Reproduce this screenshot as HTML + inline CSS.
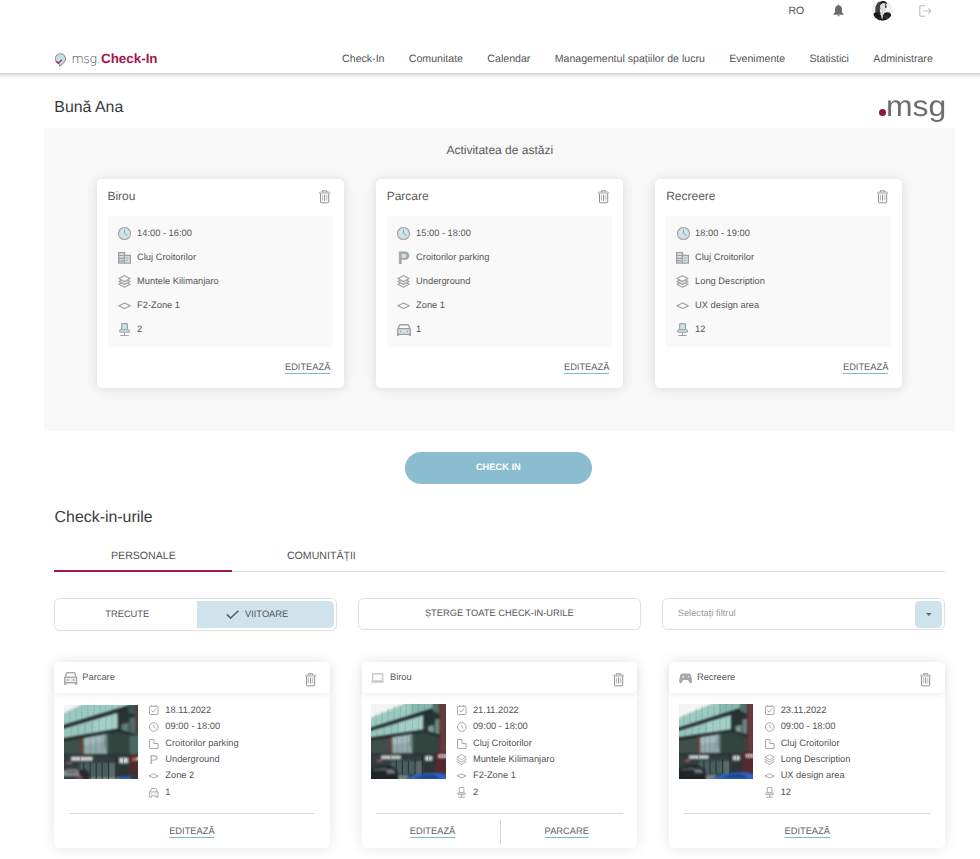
<!DOCTYPE html>
<html lang="ro">
<head>
<meta charset="utf-8">
<title>msg.Check-In</title>
<style>
*{box-sizing:border-box;margin:0;padding:0}
html,body{width:980px;height:859px;overflow:hidden;background:#fff}
body{font-family:"Liberation Sans",Arial,sans-serif;color:#555;position:relative;text-rendering:geometricPrecision}
.abs{position:absolute}
svg{display:block;overflow:visible}
#lang{left:788.4px;top:4.7px;font-size:10.6px;color:#555;line-height:12px}
#nav{left:0;top:72.9px;width:980px;height:7px;background:linear-gradient(to bottom,rgba(0,0,0,.2) 0,rgba(0,0,0,.13) 18%,rgba(0,0,0,.06) 45%,rgba(0,0,0,.02) 75%,rgba(0,0,0,0) 100%)}
#brand{left:71.6px;top:52.4px;white-space:nowrap;font-size:13.4px;line-height:14px}
#brand .m{font-family:"DejaVu Sans Light","DejaVu Sans",sans-serif;font-weight:200;font-size:12.6px;letter-spacing:-.5px;color:#484848}
#brand .c{font-weight:bold;color:#a3174b;margin-left:1px}
#menu{left:342.1px;top:52.7px;display:flex;gap:24.35px;font-size:10.6px;line-height:12px;color:#555;white-space:nowrap}
h1{font-weight:normal;font-size:15.9px;color:#3a3a3a;line-height:18px;white-space:nowrap}
#hello{left:54.3px;top:98.5px}
#biglogo{left:886.2px;top:89.8px;font-size:29.2px;line-height:34px;color:#6e6e6e;white-space:nowrap;transform:scaleX(1.095);transform-origin:0 0}
#bigdot{left:879.3px;top:108.9px;width:7px;height:7px;border-radius:50%;background:#8c1a3e}
#panel{left:44px;top:128px;width:911px;height:303px;background:#f8f8f8}
#today{left:0;top:142.8px;width:999.5px;text-align:center;font-size:12px;line-height:14px;color:#5a5a5a}
.card{top:179px;width:247px;height:209px;background:#fff;border-radius:5px;box-shadow:0 1px 12px rgba(0,0,0,.125)}
.card .t{left:10.4px;top:10.1px;font-size:12px;line-height:14px;color:#5c5c5c}
.card .box{left:10.8px;top:37px;width:225.2px;height:130.8px;background:#f9f9f9}
.row{position:absolute;height:12px;font-size:9.3px;line-height:12px;color:#555;white-space:nowrap}
.box .row{left:29.3px}
.ic{position:absolute}
.pL{position:absolute;left:-18.3px;top:-2.1px;font-size:18px;line-height:18px;font-weight:bold;color:#a6a6a6}
.pLbg{position:absolute;left:-15.2px;top:2.4px;width:5.6px;height:4.2px;background:#cfe3ea}
.pS{position:absolute;left:-15.9px;top:1.1px;font-size:12.8px;line-height:12px;color:#a6a6a6}
.edit{position:absolute;font-size:9.3px;line-height:11.85px;color:#5f5f5f;border-bottom:1.2px solid #7db8cb;white-space:nowrap}
.card .edit{right:13.6px;top:182.5px}
#checkin{left:404.6px;top:451.8px;width:187.5px;height:32.1px;border-radius:16.05px;background:#8bbdd1;color:#fff;font-weight:bold;font-size:9.3px;line-height:31.4px;text-align:center}
#h2{left:54.6px;top:509.2px}
.tab{top:549.8px;width:178px;text-align:center;font-size:10.6px;line-height:12px;color:#555}
#tabline{left:232px;top:570.7px;width:713px;height:1px;background:#dcdcdc}
#tabact{left:54.3px;top:570.1px;width:177.8px;height:1.7px;background:#a6194f}
.fbox{top:598px;width:283px;height:32px;border:1px solid #dfdfdf;border-radius:5.5px;background:#fff}
.ftxt{font-size:9.3px;line-height:12px;color:#555;white-space:nowrap}
.bc{top:662px;width:275.67px;height:186px;background:#fff;border-radius:5px;box-shadow:0 0 15px rgba(0,0,0,.1)}
.bc .hd{left:0;top:0;width:275.67px;height:31px;background:#fff;border-radius:5px;box-shadow:0 3px 6px rgba(0,0,0,.06)}
.bc .ttl{left:28.3px;top:8.6px;font-size:9.3px;line-height:12px;color:#555}
.bc .photo{left:10px;top:42.9px;width:74px;height:74px}
.bc .row{left:111.3px}
.bc .hr{left:14.7px;top:150.6px;width:246.3px;height:1px;background:#d8d8d8}
.bc .edit{top:164px;line-height:10.9px;transform:translateX(-50%)}
</style>
</head>
<body>
<!-- top utility bar -->
<div class="abs" id="lang">RO</div>
<svg class="abs" width="13" height="13" viewBox="0 0 13 13" style="left:831.7px;top:3.6px"><path d="M6.5 .6Q7.3 .6 7.3 1.5Q10 2.3 10 5.4V8.2L11.7 10.2V10.8H1.3V10.2L3 8.2V5.4Q3 2.3 5.7 1.5Q5.7 .6 6.5 .6Z" fill="#6b6b6b"/><path d="M5.3 11.3H7.7Q7.5 12.4 6.5 12.4Q5.5 12.4 5.3 11.3Z" fill="#6b6b6b"/></svg>
<svg class="abs" width="21" height="21" viewBox="0 0 21 21" style="left:872px;top:0"><clipPath id="av"><circle cx="10.4" cy="10.7" r="9.9"/></clipPath><filter id="avb" x="-10%" y="-10%" width="120%" height="120%"><feGaussianBlur stdDeviation=".45"/></filter><circle cx="10.4" cy="10.7" r="10.2" fill="#e2e2e2"/><g clip-path="url(#av)"><g filter="url(#avb)"><rect width="21" height="21" fill="#f0f0f0"/><path d="M3.4 12.4Q2.6 6 6 2.6Q8.6 .8 12 1.2Q14 1.6 14.2 3.2Q12 2.4 10 3.6Q8 5 7.8 9Q7.8 12 9 13.6L5 15Z" fill="#414141"/><path d="M7.6 2.6Q10 .5 13.2 1.3Q15.2 2.4 15.5 4.6L14 3.6Q11 2.6 9 3.7Z" fill="#1f1f1f"/><path d="M8.6 5Q10.5 3 13.4 3.8Q14.3 7 13.6 10Q12.8 13 11 13.9Q8.6 12 8 9Q7.8 6.4 8.6 5Z" fill="#dedede"/><path d="M12.3 3.3Q14.8 4 14.5 7.4L13.5 7.9L12.7 6.5L13.6 6Q13.4 4.5 12.3 3.3Z" fill="#1c1c1c"/><path d="M7.8 8.2H9.2" stroke="#5a4a4c" stroke-width=".6"/><path d="M10 12.3H10.9" stroke="#8a6a70" stroke-width=".55"/><path d="M1.6 13.6Q4 11.5 7 12.3L10 17L12.6 12.7Q16 11.8 18.2 13Q20 15.4 19.4 17.6Q16 21.4 10.4 21.4Q5 21.4 1.6 17Z" fill="#1d1d1d"/><path d="M9 13.2L11 13.6L10.7 18.8L9.5 18.4Z" fill="#d2d2d2"/><path d="M12.6 16.6L15.4 15.6M13.4 18.6L16 17.4" stroke="#6a6a6a" stroke-width=".6"/></g></g></svg>
<svg class="abs" width="13" height="12" viewBox="0 0 13 12" style="left:919.4px;top:4.8px"><path d="M6 .7H2Q.8 .7 .8 1.9V10.1Q.8 11.3 2 11.3H6" fill="none" stroke="#b9b9b9" stroke-width="1.1"/><path d="M4.2 6H11.9M9.4 3.5L11.9 6L9.4 8.5" fill="none" stroke="#c4c4c4" stroke-width="1.1"/></svg>

<!-- nav -->
<div class="abs" id="nav"></div>
<svg class="abs" width="13" height="14" viewBox="0 0 13 14" style="left:53.9px;top:52.6px"><path d="M6.4 .7A5.2 5.2 0 0 1 9.9 9.7Q8 11.6 5.4 13.2Q5.9 11.6 5.7 11A5.2 5.2 0 0 1 6.4 .7Z" fill="#c3dde9" stroke="#8d8d8d" stroke-width="1"/><path d="M2.3 8.2L4.4 10.2L7.9 6.9" fill="none" stroke="#b01c4d" stroke-width="1.3"/></svg>
<div class="abs" id="brand"><span class="m">msg.</span><span class="c">Check-In</span></div>
<div class="abs" id="menu"><span>Check-In</span><span>Comunitate</span><span>Calendar</span><span>Managementul spațiilor de lucru</span><span>Evenimente</span><span>Statistici</span><span>Administrare</span></div>

<h1 class="abs" id="hello">Bună Ana</h1>
<div class="abs" id="bigdot"></div>
<div class="abs" id="biglogo">msg</div>

<div class="abs" id="panel"></div>
<div class="abs" id="today">Activitatea de astăzi</div>

<!-- today cards -->
<div class="abs card" style="left:97px">
  <div class="abs t">Birou</div>
  <svg class="ic" width="12" height="14" viewBox="0 0 12 14" style="position:absolute;left:221.6px;top:11.2px"><path d="M3.4 2V.8H7.8V2" fill="none" stroke="#8a8a8a" stroke-width=".95" stroke-linejoin="round"/><rect x=".35" y="2" width="10.5" height="1.25" rx=".6" fill="#e6e6e6" stroke="#9c9c9c" stroke-width=".55"/><path d="M1.5 3.4V12.1Q1.5 12.8 2.2 12.8H9Q9.7 12.8 9.7 12.1V3.4" fill="none" stroke="#8c8c8c" stroke-width=".95"/><path d="M3.4 4.6V10.6M7.8 4.6V10.6" stroke="#999" stroke-width=".7"/><path d="M5.6 4.6V10.6" stroke="#6a6a6a" stroke-width=".8"/></svg>
  <div class="abs box">
    <div class="row" style="top:10.8px"><svg class="ic" width="15" height="15" viewBox="0 0 15 15" style="left:-19.85px;top:-.85px"><circle cx="7.5" cy="7.5" r="6" fill="#cfe3ea" stroke="#a1a1a1" stroke-width="1.1"/><path d="M7.5 4.1V7.4L10.3 9.4" fill="none" stroke="#a1a1a1" stroke-width="1" stroke-linecap="round"/></svg>14:00 - 16:00</div>
    <div class="row" style="top:34.8px"><svg class="ic" width="13" height="12" viewBox="0 0 13 12" style="left:-19px;top:1.3px"><path d="M.65 .65H6.5V11.2H.65Z" fill="#cfe3ea" stroke="#a1a1a1" stroke-width="1.3"/><path d="M6.5 3.45H12.35V11.2H6.5Z" fill="#cfe3ea" stroke="#a1a1a1" stroke-width="1.3"/><path d="M.65 3.5H6.5M.65 6.3H6.5M.65 8.8H6.5" fill="none" stroke="#a1a1a1" stroke-width="1.15"/><path d="M8.2 5.9H10.4M8.2 8.2H10.4" fill="none" stroke="#a1a1a1" stroke-width="1"/></svg>Cluj Croitorilor</div>
    <div class="row" style="top:58.8px"><svg class="ic" width="13" height="13" viewBox="0 0 13 13" style="left:-19px;top:.1px"><path d="M.9 9.3L6.5 6.3L12.1 9.3L6.5 12.3Z" fill="#f9f9f9" stroke="#a1a1a1" stroke-width="1.15" stroke-linejoin="round"/><path d="M.9 6.4L6.5 3.4L12.1 6.4L6.5 9.4Z" fill="#cfe3ea" stroke="#a1a1a1" stroke-width="1.15" stroke-linejoin="round"/><path d="M.9 3.55L6.5 .65L12.1 3.55L6.5 6.45Z" fill="#f9f9f9" stroke="#a1a1a1" stroke-width="1.15" stroke-linejoin="round"/></svg>Muntele Kilimanjaro</div>
    <div class="row" style="top:82.8px"><svg class="ic" width="14" height="8" viewBox="0 0 14 8" style="left:-19.1px;top:2.95px"><path d="M.85 3.7L6.6 .95L12.35 3.7L6.6 6.45Z" fill="none" stroke="#a1a1a1" stroke-width="1.2" stroke-linejoin="round"/></svg>F2-Zone 1</div>
    <div class="row" style="top:106.8px"><svg class="ic" width="12" height="13" viewBox="0 0 12 13" style="left:-18px;top:.2px"><rect x="2.7" y=".65" width="5.7" height="6.1" rx=".8" fill="#cfe3ea" stroke="#a1a1a1" stroke-width="1.2"/><rect x=".65" y="6.75" width="9.8" height="2.5" rx="1.25" fill="#cfe3ea" stroke="#a1a1a1" stroke-width="1.2"/><path d="M5.5 9.8V12.3M1.7 12.4H9.4" fill="none" stroke="#a1a1a1" stroke-width="1.05" stroke-linecap="round"/></svg>2</div>
  </div>
  <div class="edit">EDITEAZĂ</div>
</div>
<div class="abs card" style="left:376px">
  <div class="abs t" style="left:10.7px">Parcare</div>
  <svg class="ic" width="12" height="14" viewBox="0 0 12 14" style="position:absolute;left:221.6px;top:11.2px"><path d="M3.4 2V.8H7.8V2" fill="none" stroke="#8a8a8a" stroke-width=".95" stroke-linejoin="round"/><rect x=".35" y="2" width="10.5" height="1.25" rx=".6" fill="#e6e6e6" stroke="#9c9c9c" stroke-width=".55"/><path d="M1.5 3.4V12.1Q1.5 12.8 2.2 12.8H9Q9.7 12.8 9.7 12.1V3.4" fill="none" stroke="#8c8c8c" stroke-width=".95"/><path d="M3.4 4.6V10.6M7.8 4.6V10.6" stroke="#999" stroke-width=".7"/><path d="M5.6 4.6V10.6" stroke="#6a6a6a" stroke-width=".8"/></svg>
  <div class="abs box">
    <div class="row" style="top:10.8px"><svg class="ic" width="15" height="15" viewBox="0 0 15 15" style="left:-19.85px;top:-.85px"><circle cx="7.5" cy="7.5" r="6" fill="#cfe3ea" stroke="#a1a1a1" stroke-width="1.1"/><path d="M7.5 4.1V7.4L10.3 9.4" fill="none" stroke="#a1a1a1" stroke-width="1" stroke-linecap="round"/></svg>15:00 - 18:00</div>
    <div class="row" style="top:34.8px"><i class="pLbg"></i><b class="pL">P</b>Croitorilor parking</div>
    <div class="row" style="top:58.8px"><svg class="ic" width="13" height="13" viewBox="0 0 13 13" style="left:-19px;top:.1px"><path d="M.9 9.3L6.5 6.3L12.1 9.3L6.5 12.3Z" fill="#f9f9f9" stroke="#a1a1a1" stroke-width="1.15" stroke-linejoin="round"/><path d="M.9 6.4L6.5 3.4L12.1 6.4L6.5 9.4Z" fill="#cfe3ea" stroke="#a1a1a1" stroke-width="1.15" stroke-linejoin="round"/><path d="M.9 3.55L6.5 .65L12.1 3.55L6.5 6.45Z" fill="#f9f9f9" stroke="#a1a1a1" stroke-width="1.15" stroke-linejoin="round"/></svg>Underground</div>
    <div class="row" style="top:82.8px"><svg class="ic" width="14" height="8" viewBox="0 0 14 8" style="left:-19.1px;top:2.95px"><path d="M.85 3.7L6.6 .95L12.35 3.7L6.6 6.45Z" fill="none" stroke="#a1a1a1" stroke-width="1.2" stroke-linejoin="round"/></svg>Zone 1</div>
    <div class="row" style="top:106.8px"><svg class="ic" width="14" height="12" viewBox="0 0 14 12" style="left:-19.3px;top:1.1px"><path d="M1.2 4.6L2.4 1.25Q2.6 .75 3.2 .75H10.8Q11.4 .75 11.6 1.25L12.8 4.6" fill="none" stroke="#a1a1a1" stroke-width="1.4"/><rect x="0" y="9.6" width="2.1" height="2.4" rx=".4" fill="#a1a1a1"/><rect x="11.9" y="9.6" width="2.1" height="2.4" rx=".4" fill="#a1a1a1"/><rect x=".65" y="4.6" width="12.7" height="5.7" rx=".7" fill="#cfe3ea" stroke="#a1a1a1" stroke-width="1.3"/><circle cx="3.6" cy="7.3" r=".9" fill="#a9a5a8"/><circle cx="10.5" cy="7.3" r=".9" fill="#a9a5a8"/></svg>1</div>
  </div>
  <div class="edit">EDITEAZĂ</div>
</div>
<div class="abs card" style="left:655px">
  <div class="abs t" style="left:11.2px">Recreere</div>
  <svg class="ic" width="12" height="14" viewBox="0 0 12 14" style="position:absolute;left:221.6px;top:11.2px"><path d="M3.4 2V.8H7.8V2" fill="none" stroke="#8a8a8a" stroke-width=".95" stroke-linejoin="round"/><rect x=".35" y="2" width="10.5" height="1.25" rx=".6" fill="#e6e6e6" stroke="#9c9c9c" stroke-width=".55"/><path d="M1.5 3.4V12.1Q1.5 12.8 2.2 12.8H9Q9.7 12.8 9.7 12.1V3.4" fill="none" stroke="#8c8c8c" stroke-width=".95"/><path d="M3.4 4.6V10.6M7.8 4.6V10.6" stroke="#999" stroke-width=".7"/><path d="M5.6 4.6V10.6" stroke="#6a6a6a" stroke-width=".8"/></svg>
  <div class="abs box">
    <div class="row" style="top:10.8px"><svg class="ic" width="15" height="15" viewBox="0 0 15 15" style="left:-19.55px;top:-.85px"><circle cx="7.5" cy="7.5" r="6" fill="#cfe3ea" stroke="#a1a1a1" stroke-width="1.1"/><path d="M7.5 4.1V7.4L10.3 9.4" fill="none" stroke="#a1a1a1" stroke-width="1" stroke-linecap="round"/></svg>18:00 - 19:00</div>
    <div class="row" style="top:34.8px"><svg class="ic" width="13" height="12" viewBox="0 0 13 12" style="left:-18.70px;top:1.3px"><path d="M.65 .65H6.5V11.2H.65Z" fill="#cfe3ea" stroke="#a1a1a1" stroke-width="1.3"/><path d="M6.5 3.45H12.35V11.2H6.5Z" fill="#cfe3ea" stroke="#a1a1a1" stroke-width="1.3"/><path d="M.65 3.5H6.5M.65 6.3H6.5M.65 8.8H6.5" fill="none" stroke="#a1a1a1" stroke-width="1.15"/><path d="M8.2 5.9H10.4M8.2 8.2H10.4" fill="none" stroke="#a1a1a1" stroke-width="1"/></svg>Cluj Croitorilor</div>
    <div class="row" style="top:58.8px"><svg class="ic" width="13" height="13" viewBox="0 0 13 13" style="left:-18.70px;top:.1px"><path d="M.9 9.3L6.5 6.3L12.1 9.3L6.5 12.3Z" fill="#f9f9f9" stroke="#a1a1a1" stroke-width="1.15" stroke-linejoin="round"/><path d="M.9 6.4L6.5 3.4L12.1 6.4L6.5 9.4Z" fill="#cfe3ea" stroke="#a1a1a1" stroke-width="1.15" stroke-linejoin="round"/><path d="M.9 3.55L6.5 .65L12.1 3.55L6.5 6.45Z" fill="#f9f9f9" stroke="#a1a1a1" stroke-width="1.15" stroke-linejoin="round"/></svg>Long Description</div>
    <div class="row" style="top:82.8px"><svg class="ic" width="14" height="8" viewBox="0 0 14 8" style="left:-18.80px;top:2.95px"><path d="M.85 3.7L6.6 .95L12.35 3.7L6.6 6.45Z" fill="none" stroke="#a1a1a1" stroke-width="1.2" stroke-linejoin="round"/></svg>UX design area</div>
    <div class="row" style="top:106.8px"><svg class="ic" width="12" height="13" viewBox="0 0 12 13" style="left:-17.70px;top:.2px"><rect x="2.7" y=".65" width="5.7" height="6.1" rx=".8" fill="#cfe3ea" stroke="#a1a1a1" stroke-width="1.2"/><rect x=".65" y="6.75" width="9.8" height="2.5" rx="1.25" fill="#cfe3ea" stroke="#a1a1a1" stroke-width="1.2"/><path d="M5.5 9.8V12.3M1.7 12.4H9.4" fill="none" stroke="#a1a1a1" stroke-width="1.05" stroke-linecap="round"/></svg>12</div>
  </div>
  <div class="edit">EDITEAZĂ</div>
</div>

<div class="abs" id="checkin">CHECK IN</div>

<h1 class="abs" id="h2">Check-in-urile</h1>
<div class="abs tab" style="left:54.4px">PERSONALE</div>
<div class="abs tab" style="left:232.4px">COMUNITĂȚII</div>
<div class="abs" id="tabline"></div>
<div class="abs" id="tabact"></div>

<!-- filter row -->
<div class="abs fbox" style="left:54px;height:32.9px">
  <div class="abs ftxt" style="left:50.3px;top:8.7px">TRECUTE</div>
  <div class="abs" style="left:142px;top:2px;width:136.7px;height:27px;background:#cee3eb;border-radius:0 5px 5px 0"></div>
  <svg class="abs" width="14" height="10" viewBox="0 0 14 10" style="left:171px;top:10.6px"><path d="M.9 4.4L4.6 8.1L12.4 .7" fill="none" stroke="#606060" stroke-width="1.55"/></svg>
  <div class="abs ftxt" style="left:190px;top:8.7px">VIITOARE</div>
</div>
<div class="abs fbox" style="left:358px">
  <div class="abs ftxt" style="left:-.2px;top:7.5px;width:281px;text-align:center">ȘTERGE TOATE CHECK-IN-URILE</div>
</div>
<div class="abs fbox" style="left:662px">
  <div class="abs ftxt" style="left:14.75px;top:7.6px;color:#9a9a9a">Selectați filtrul</div>
  <div class="abs" style="left:252px;top:2px;width:27.1px;height:27px;background:#cee3eb;border-radius:4.5px"></div>
  <svg class="abs" width="6" height="4" viewBox="0 0 6 4" style="left:262.8px;top:14px"><path d="M0 0H5.6L2.8 3.1Z" fill="#666"/></svg>
</div>

<!-- bottom cards -->
<div class="abs bc" style="left:54px">
  <div class="abs hd"></div>
  <svg class="ic" width="14" height="13" viewBox="0 0 14 13" style="position:absolute;left:9.8px;top:10.1px"><path d="M1.1 5.3L2.3 1.45Q2.55 .8 3.3 .8H10Q10.75 .8 11 1.45L12.2 5.3" fill="none" stroke="#ababab" stroke-width="1.45"/><rect x="0" y="9.8" width="2.5" height="3" rx=".4" fill="#ababab"/><rect x="10.8" y="9.8" width="2.5" height="3" rx=".4" fill="#ababab"/><rect x=".7" y="5.3" width="11.9" height="5.4" rx=".6" fill="#ececec" stroke="#ababab" stroke-width="1.4"/><circle cx="3.5" cy="7.9" r=".95" fill="#a3a3a3"/><circle cx="9.8" cy="7.9" r=".95" fill="#a3a3a3"/></svg>
  <div class="abs ttl">Parcare</div>
  <svg class="ic" width="12" height="14" viewBox="0 0 12 14" style="position:absolute;left:250.9px;top:10.5px"><path d="M3.4 2V.8H7.8V2" fill="none" stroke="#8a8a8a" stroke-width=".95" stroke-linejoin="round"/><rect x=".35" y="2" width="10.5" height="1.25" rx=".6" fill="#e6e6e6" stroke="#9c9c9c" stroke-width=".55"/><path d="M1.5 3.4V12.1Q1.5 12.8 2.2 12.8H9Q9.7 12.8 9.7 12.1V3.4" fill="none" stroke="#8c8c8c" stroke-width=".95"/><path d="M3.4 4.6V10.6M7.8 4.6V10.6" stroke="#999" stroke-width=".7"/><path d="M5.6 4.6V10.6" stroke="#6a6a6a" stroke-width=".8"/></svg>
  <svg class="abs photo" width="74" height="74" viewBox="0 0 74 74" preserveAspectRatio="none" style="overflow:hidden;"><filter id="bl1" x="-5%" y="-5%" width="110%" height="110%" color-interpolation-filters="sRGB"><feGaussianBlur stdDeviation="1"/></filter><g filter="url(#bl1)">
<rect x="-2" y="-2" width="78" height="78" fill="#36423f"/>
<polygon points="-2,-2 24,-2 -2,10.4" fill="#f4f4f5"/>
<polygon points="-2,9 21,-2 65,-2 65,1 -2,21" fill="#9bcac1"/>
<polygon points="-2,20.6 65,.2 65,3.6 -2,24.2" fill="#1f2627"/>
<polygon points="-2,24 53.6,7.4 53.6,24.4 -2,34" fill="#97c4bb"/>
<polygon points="30,16 53.6,9 53.6,24.4 30,28.6" fill="#a3cfc7"/>
<polygon points="-2,33.6 54.5,23.6 74,29.2 74,32.2 54.5,27 -2,37" fill="#222a2a"/>
<polygon points="53.6,6.4 65,2.4 76,0 76,30 54.5,24.6" fill="#283231"/>
<polygon points="64,-2 72,-2 72,10 64,8" fill="#3a5450"/>
<polygon points="57.4,19 64.4,17.4 64.4,27 57.4,25.2" fill="#5f7f7a"/>
<polygon points="65.3,13 72,11.4 72,29 65.3,27.6" fill="#4c6b66"/>
<polygon points="71.8,-2 76,-2 76,29.8 71.8,29" fill="#5f3538"/>
<polygon points="-2,36.8 19.8,33 19.8,50 -2,50" fill="#3f4f4a"/>
<polygon points="15.2,33.8 19.8,33 19.8,50 15.2,50" fill="#5f4240"/>
<polygon points="19.8,33 43.6,28.8 43.6,49 19.8,50" fill="#8fa9a8"/>
<polygon points="19.8,33 43.6,28.8 43.6,36 19.8,40" fill="#a0b8b8"/>
<polygon points="40.6,29.4 46,28.4 43.6,49 40,40" fill="#6c8886"/>
<polygon points="43.6,28.8 54.5,26.8 65.3,30.4 65.3,50 43.6,49" fill="#30463f"/>
<polygon points="65.3,30.4 76,29.6 76,49.4 65.3,50" fill="#4a6762"/>
<rect x="-2" y="49.2" width="68" height="1.9" fill="#2a3130"/>
<rect x="-2" y="51" width="78" height="25" fill="#323d3d"/>
<rect x="6.9" y="51.6" width="21.8" height="4.3" fill="#cfd2d2"/>
<rect x="15.8" y="57.8" width="29" height="16" fill="#47605f"/>
<rect x="44.8" y="57.8" width="6.8" height="16" fill="#5c6a6b"/>
<rect x="52.6" y="51" width="12.8" height="21" fill="#2a3535"/>
<rect x="55" y="52.6" width="9.4" height="5.8" fill="#d2d6d6"/>
<polygon points="65.3,49.6 76,49 76,69 65.3,71" fill="#4d2a2e"/>
<rect x="68" y="52.8" width="3" height="3.6" fill="#e2594f"/>
<rect x="71.8" y="52.4" width="4" height="3" fill="#e4e4e4"/>
<rect x="2" y="57" width="6" height="2" fill="#9c5a5c"/>
<path d="M-2 66Q6 63.2 13 64.2L19 66.2Q25 67 25 70V76H-2Z" fill="#8d9395"/>
<path d="M14 65.4L19 64.4Q24.4 64.6 25.6 69V76H18Z" fill="#25292a"/>
<path d="M2 66.2L11 65.2L14 68.2H2Z" fill="#596163"/>
<rect x="-2" y="71" width="21" height="5" fill="#3a3e40"/>
<ellipse cx="16" cy="72.6" rx="3.6" ry="1.5" fill="#8a4a58"/>
<rect x="25" y="72.6" width="30" height="3.4" fill="#8c9294"/>
<polygon points="54.4,71.8 67,71.2 67,76 54.4,76" fill="#2c5fc4"/>
</g>
<g stroke="#4d6b66" stroke-width=".5" opacity=".45"><path d="M6 6.4V18.8M12 3.6V17M18 .8V15.2M24 0V13.4M30 0V11.6M36 0V9.8M42 0V8M48 0V6.2M54 0V4.4"/><path d="M7 22V32.4M14 19.8V31.2M21 17.6V30M28 15.6V28.8M35 13.4V27.6M42 11.4V26.4M48 9.6V25.4"/></g>
<g stroke="#55706e" stroke-width=".5" opacity=".5"><path d="M26 32V49.6M32 31V49.4M38 30V49.2"/></g>
<g stroke="#232a2a" stroke-width=".9"><path d="M19.8 57.8V74M26.2 57.8V74M32.2 57.8V74M38.1 57.8V74M44.6 55.6V74M52 51V74"/></g>
<path d="M16.3 51.6V55.9M59.4 52.6V58.4" stroke="#6a7070" stroke-width=".7"/>
</svg>
  <div class="row" style="top:41.5px"><svg class="ic" width="10" height="10" viewBox="0 0 10 10" style="left:-16px;top:1.7px"><rect x=".5" y="1.3" width="8.5" height="8.2" rx=".8" fill="none" stroke="#a9a9a9" stroke-width="1"/><path d="M2.7 0V1.9M6.8 0V1.9" stroke="#a9a9a9" stroke-width="1"/><path d="M2.5 5.4L4.2 7L7.1 3.6" fill="none" stroke="#a9a9a9" stroke-width="1"/></svg>18.11.2022</div>
  <div class="row" style="top:57.85px"><svg class="ic" width="10" height="10" viewBox="0 0 10 10" style="left:-16.1px;top:1.85px"><circle cx="4.8" cy="5" r="4.3" fill="none" stroke="#a9a9a9" stroke-width="1"/><path d="M4.8 2.6V5.1L6.6 6.4" fill="none" stroke="#a9a9a9" stroke-width=".9"/></svg>09:00 - 18:00</div>
  <div class="row" style="top:74.6px"><svg class="ic" width="10" height="10" viewBox="0 0 10 10" style="left:-16px;top:2.5px"><path d="M.5 .5H5V4.5H9.1V9.5H.5Z" fill="none" stroke="#a9a9a9" stroke-width="1" stroke-linejoin="miter"/></svg>Croitorilor parking</div>
  <div class="row" style="top:90.55px"><span class="pS">P</span>Underground</div>
  <div class="row" style="top:106.9px"><svg class="ic" width="11" height="6" viewBox="0 0 11 6" style="left:-16.9px;top:4.25px"><path d="M1 2.9L5.5 .8L10 2.9L5.5 5Z" fill="none" stroke="#a9a9a9" stroke-width="1" stroke-linejoin="round"/><path d="M1 2.9H2.2M8.8 2.9H10" stroke="#a9a9a9" stroke-width=".7"/></svg>Zone 2</div>
  <div class="row" style="top:123.7px"><svg class="ic" width="10" height="10" viewBox="0 0 10 10" style="left:-16.1px;top:2.8px"><path d="M1.3 3.9L2.2 1.1Q2.4 .5 3 .5H6.6Q7.2 .5 7.4 1.1L8.3 3.9" fill="none" stroke="#a9a9a9" stroke-width="1"/><path d="M.55 3.9H9.05V9.3H7.3V7.9H2.3V9.3H.55Z" fill="none" stroke="#a9a9a9" stroke-width="1" stroke-linejoin="round"/><circle cx="2.6" cy="5.9" r=".6" fill="#a9a9a9"/><circle cx="7" cy="5.9" r=".6" fill="#a9a9a9"/></svg>1</div>
  <div class="abs hr"></div>
  <div class="edit" style="left:137.9px">EDITEAZĂ</div>
</div>
<div class="abs bc" style="left:361.67px">
  <div class="abs hd"></div>
  <svg class="ic" width="14" height="11" viewBox="0 0 14 11" style="position:absolute;left:9.5px;top:10.95px"><rect x="1.6" y=".75" width="10" height="7.3" rx=".5" fill="#fdfdfd" stroke="#cacaca" stroke-width="1.5"/><path d="M.7 9H12.5" stroke="#cacaca" stroke-width="1.5" stroke-linecap="round"/></svg>
  <div class="abs ttl">Birou</div>
  <svg class="ic" width="12" height="14" viewBox="0 0 12 14" style="position:absolute;left:250.9px;top:10.5px"><path d="M3.4 2V.8H7.8V2" fill="none" stroke="#8a8a8a" stroke-width=".95" stroke-linejoin="round"/><rect x=".35" y="2" width="10.5" height="1.25" rx=".6" fill="#e6e6e6" stroke="#9c9c9c" stroke-width=".55"/><path d="M1.5 3.4V12.1Q1.5 12.8 2.2 12.8H9Q9.7 12.8 9.7 12.1V3.4" fill="none" stroke="#8c8c8c" stroke-width=".95"/><path d="M3.4 4.6V10.6M7.8 4.6V10.6" stroke="#999" stroke-width=".7"/><path d="M5.6 4.6V10.6" stroke="#6a6a6a" stroke-width=".8"/></svg>
  <svg class="abs photo" width="74" height="74" viewBox="0 0 74 74" preserveAspectRatio="none" style="overflow:hidden;left:9.35px;top:42px;width:74.7px;height:74.8px"><filter id="bl2" x="-5%" y="-5%" width="110%" height="110%" color-interpolation-filters="sRGB"><feGaussianBlur stdDeviation="1"/></filter><g filter="url(#bl2)">
<rect x="-2" y="-2" width="78" height="78" fill="#36423f"/>
<polygon points="-2,-2 40,-2 -2,15.6" fill="#f4f4f5"/>
<polygon points="-2,14.4 37,-2 61,-2 61,4.6 -2,24.4" fill="#9bcac1"/>
<polygon points="40,-2 61,-2 61,4.6 40,11" fill="#86b8ae"/>
<polygon points="-2,24 61,4.2 61,7.6 -2,27.4" fill="#1f2627"/>
<polygon points="-2,27 52,10.8 52,25.7 -2,33.8" fill="#97c4bb"/>
<polygon points="28,18 52,11.2 52,25.7 28,29.4" fill="#a3cfc7"/>
<polygon points="-2,33.4 52,25.3 69.3,30.3 69.3,33.2 52,28.2 -2,36.6" fill="#222a2a"/>
<polygon points="52,9.6 61,6.6 68.3,4.6 68.3,30.4 52,25.7" fill="#283231"/>
<polygon points="61,-2 68,-2 68,10 61,7" fill="#4f706b"/>
<polygon points="56.4,22 62.4,20.6 62.4,28.6 56.4,27" fill="#7b9893"/>
<polygon points="63.4,15.4 68.4,14.2 68.4,30.2 63.4,29" fill="#6a8a85"/>
<polygon points="67.8,-2 76,-2 76,49 67.8,49" fill="#5e3337"/>
<polygon points="70.4,-2 72.6,-2 72.6,49 70.4,49" fill="#6d4247"/>
<polygon points="-2,36.4 21,33 21,49.6 -2,49.6" fill="#3f4f4a"/>
<polygon points="17,33.6 21,33 21,49.6 17,49.6" fill="#5f4240"/>
<polygon points="21,33 41.4,29.8 41.4,49 21,49.6" fill="#8fa9a8"/>
<polygon points="21,33 41.4,29.8 41.4,37 21,40.4" fill="#a2babb"/>
<polygon points="39,30.2 44,29.4 41.4,49 38,40" fill="#6c8886"/>
<polygon points="41.4,29.8 52,28 63.4,31.4 63.4,49.6 41.4,49" fill="#30463f"/>
<rect x="-2" y="48.8" width="66" height="1.9" fill="#2a3130"/>
<rect x="-2" y="50.6" width="78" height="26" fill="#323d3d"/>
<rect x="9.9" y="50.8" width="19.8" height="3.9" fill="#c6caca"/>
<rect x="19.8" y="56.4" width="25" height="13" fill="#47605f"/>
<rect x="44.8" y="56.4" width="6" height="14" fill="#5c6a6b"/>
<rect x="51.6" y="50.6" width="12" height="20" fill="#2a3535"/>
<rect x="53.5" y="51.2" width="7.4" height="5" fill="#cfd4d4"/>
<polygon points="63.4,47.6 76,47.6 76,76 63.4,76" fill="#55292e"/>
<rect x="66.6" y="49.9" width="9.4" height="3.3" fill="#e9e6e6"/>
<rect x="5.6" y="55.4" width="5.4" height="2" fill="#a75a60"/>
<path d="M-2 64.6Q8 60.4 17 60.8L23 62.8Q26.8 66 26.8 70V76H-2Z" fill="#212426"/>
<path d="M2 64.4L14 62.6L18 66H2Z" fill="#4e575a"/>
<path d="M15.4 64.6L21 64.4Q24 66 24.6 69H15.4Z" fill="#70777a"/>
<rect x="26.8" y="70.4" width="10" height="5.6" fill="#7b8184"/>
<path d="M31.6 76Q40 69.6 52 68.4L66 68Q72.6 68.8 76 70.6V76Z" fill="#2b63c8"/>
<path d="M43 73.6L52 70.4L63 70.2L68 73.6Z" fill="#1c3f82"/>
</g>
<g stroke="#4d6b66" stroke-width=".5" opacity=".45"><path d="M5 10.4V22M11 7.4V20.2M17 4.4V18.2M23 1.6V16.4M29 2.6V14.6M35 .4V12.6M41 0V10.8M47 0V9M53 0V7"/><path d="M6 24.6V32.4M13 22.6V31.4M20 20.4V30.4M27 18.4V29.4M34 16.2V28.4M41 14.2V27.2M47 12.4V26.4"/></g>
<g stroke="#55706e" stroke-width=".5" opacity=".5"><path d="M26 32.4V49.4M31 31.6V49.2M36 30.8V49.2"/></g>
<g stroke="#232a2a" stroke-width=".9"><path d="M25 56.4V70M31 56.4V70M37 56.4V69M43.6 54.6V69.4M51 50.6V70"/></g>
<path d="M19.6 50.8V54.7M57.2 51.2V56.2" stroke="#6a7070" stroke-width=".7"/>
<path d="M68.6 50.4V52.8M70.2 50.4V52.8M71.8 50.4V52.8M73.6 50.4V52.8" stroke="#6d4448" stroke-width=".55"/>
</svg>
  <div class="row" style="top:41.5px"><svg class="ic" width="10" height="10" viewBox="0 0 10 10" style="left:-16px;top:1.7px"><rect x=".5" y="1.3" width="8.5" height="8.2" rx=".8" fill="none" stroke="#a9a9a9" stroke-width="1"/><path d="M2.7 0V1.9M6.8 0V1.9" stroke="#a9a9a9" stroke-width="1"/><path d="M2.5 5.4L4.2 7L7.1 3.6" fill="none" stroke="#a9a9a9" stroke-width="1"/></svg>21.11.2022</div>
  <div class="row" style="top:57.85px"><svg class="ic" width="10" height="10" viewBox="0 0 10 10" style="left:-16.1px;top:1.85px"><circle cx="4.8" cy="5" r="4.3" fill="none" stroke="#a9a9a9" stroke-width="1"/><path d="M4.8 2.6V5.1L6.6 6.4" fill="none" stroke="#a9a9a9" stroke-width=".9"/></svg>09:00 - 18:00</div>
  <div class="row" style="top:74.6px"><svg class="ic" width="10" height="10" viewBox="0 0 10 10" style="left:-16px;top:2.5px"><path d="M.5 .5H5V4.5H9.1V9.5H.5Z" fill="none" stroke="#a9a9a9" stroke-width="1" stroke-linejoin="miter"/></svg>Cluj Croitorilor</div>
  <div class="row" style="top:90.55px"><svg class="ic" width="11" height="12" viewBox="0 0 11 12" style="left:-16.9px;top:1.15px"><path d="M.9 3.2L5.5 .6L10.1 3.2L5.5 5.8Z" fill="#fff" stroke="#a9a9a9" stroke-width=".9" stroke-linejoin="round"/><path d="M.9 5.5L5.5 8.1L10.1 5.5M.9 7.8L5.5 10.4L10.1 7.8" fill="none" stroke="#a9a9a9" stroke-width=".9" stroke-linejoin="round" stroke-linecap="round"/><path d="M.9 3.2H2.4M8.6 3.2H10.1M.9 5.5H2.4M8.6 5.5H10.1M.9 7.8H2.4M8.6 7.8H10.1" stroke="#a9a9a9" stroke-width=".55"/></svg>Muntele Kilimanjaro</div>
  <div class="row" style="top:106.9px"><svg class="ic" width="11" height="6" viewBox="0 0 11 6" style="left:-16.9px;top:4.25px"><path d="M1 2.9L5.5 .8L10 2.9L5.5 5Z" fill="none" stroke="#a9a9a9" stroke-width="1" stroke-linejoin="round"/><path d="M1 2.9H2.2M8.8 2.9H10" stroke="#a9a9a9" stroke-width=".7"/></svg>F2-Zone 1</div>
  <div class="row" style="top:123.7px"><svg class="ic" width="10" height="11" viewBox="0 0 10 11" style="left:-15.85px;top:1.6px"><rect x="2.3" y=".5" width="4.6" height="5.4" rx=".6" fill="none" stroke="#a9a9a9" stroke-width="1"/><rect x=".55" y="5.9" width="8" height="1.7" rx=".85" fill="#fff" stroke="#a9a9a9" stroke-width="1"/><path d="M4.6 7.9V10.2M1.3 10.25H7.9" fill="none" stroke="#a9a9a9" stroke-width="1"/></svg>2</div>
  <div class="abs hr"></div>
  <div class="edit" style="left:70.9px">EDITEAZĂ</div>
  <div class="edit" style="left:205.1px">PARCARE</div>
  <div class="abs" style="left:138.4px;top:158px;width:1px;height:23.6px;background:#d8d8d8"></div>
</div>
<div class="abs bc" style="left:669.33px">
  <div class="abs hd"></div>
  <svg class="ic" width="14" height="11" viewBox="0 0 14 11" style="position:absolute;left:9.6px;top:11.2px"><path d="M3.4 .4H9.8Q11.6 .4 12.1 2.4L13.1 7.6Q13.4 9.9 11.9 10.2Q10.9 10.3 10.1 9L9 7.1H4.2L3.1 9Q2.3 10.3 1.3 10.2Q-.2 9.9 .1 7.6L1.1 2.4Q1.6 .4 3.4 .4Z" fill="#a8a8a8"/><circle cx="4" cy="3.9" r="1.1" fill="#e2e2e2"/><circle cx="9.6" cy="3.6" r=".9" fill="#dcdcdc"/></svg>
  <div class="abs ttl" style="left:27.6px">Recreere</div>
  <svg class="ic" width="12" height="14" viewBox="0 0 12 14" style="position:absolute;left:250.9px;top:10.5px"><path d="M3.4 2V.8H7.8V2" fill="none" stroke="#8a8a8a" stroke-width=".95" stroke-linejoin="round"/><rect x=".35" y="2" width="10.5" height="1.25" rx=".6" fill="#e6e6e6" stroke="#9c9c9c" stroke-width=".55"/><path d="M1.5 3.4V12.1Q1.5 12.8 2.2 12.8H9Q9.7 12.8 9.7 12.1V3.4" fill="none" stroke="#8c8c8c" stroke-width=".95"/><path d="M3.4 4.6V10.6M7.8 4.6V10.6" stroke="#999" stroke-width=".7"/><path d="M5.6 4.6V10.6" stroke="#6a6a6a" stroke-width=".8"/></svg>
  <svg class="abs photo" width="74" height="74" viewBox="0 0 74 74" preserveAspectRatio="none" style="overflow:hidden;left:9.6px;top:42.4px;width:74.1px;height:74.4px"><filter id="bl3" x="-5%" y="-5%" width="110%" height="110%" color-interpolation-filters="sRGB"><feGaussianBlur stdDeviation="1"/></filter><g filter="url(#bl3)">
<rect x="-2" y="-2" width="78" height="78" fill="#36423f"/>
<polygon points="-2,-2 40,-2 -2,15.6" fill="#f4f4f5"/>
<polygon points="-2,14.4 37,-2 61,-2 61,4.6 -2,24.4" fill="#9bcac1"/>
<polygon points="40,-2 61,-2 61,4.6 40,11" fill="#86b8ae"/>
<polygon points="-2,24 61,4.2 61,7.6 -2,27.4" fill="#1f2627"/>
<polygon points="-2,27 52,10.8 52,25.7 -2,33.8" fill="#97c4bb"/>
<polygon points="28,18 52,11.2 52,25.7 28,29.4" fill="#a3cfc7"/>
<polygon points="-2,33.4 52,25.3 69.3,30.3 69.3,33.2 52,28.2 -2,36.6" fill="#222a2a"/>
<polygon points="52,9.6 61,6.6 68.3,4.6 68.3,30.4 52,25.7" fill="#283231"/>
<polygon points="61,-2 68,-2 68,10 61,7" fill="#4f706b"/>
<polygon points="56.4,22 62.4,20.6 62.4,28.6 56.4,27" fill="#7b9893"/>
<polygon points="63.4,15.4 68.4,14.2 68.4,30.2 63.4,29" fill="#6a8a85"/>
<polygon points="67.8,-2 76,-2 76,49 67.8,49" fill="#5e3337"/>
<polygon points="70.4,-2 72.6,-2 72.6,49 70.4,49" fill="#6d4247"/>
<polygon points="-2,36.4 21,33 21,49.6 -2,49.6" fill="#3f4f4a"/>
<polygon points="17,33.6 21,33 21,49.6 17,49.6" fill="#5f4240"/>
<polygon points="21,33 41.4,29.8 41.4,49 21,49.6" fill="#8fa9a8"/>
<polygon points="21,33 41.4,29.8 41.4,37 21,40.4" fill="#a2babb"/>
<polygon points="39,30.2 44,29.4 41.4,49 38,40" fill="#6c8886"/>
<polygon points="41.4,29.8 52,28 63.4,31.4 63.4,49.6 41.4,49" fill="#30463f"/>
<rect x="-2" y="48.8" width="66" height="1.9" fill="#2a3130"/>
<rect x="-2" y="50.6" width="78" height="26" fill="#323d3d"/>
<rect x="9.9" y="50.8" width="19.8" height="3.9" fill="#c6caca"/>
<rect x="19.8" y="56.4" width="25" height="13" fill="#47605f"/>
<rect x="44.8" y="56.4" width="6" height="14" fill="#5c6a6b"/>
<rect x="51.6" y="50.6" width="12" height="20" fill="#2a3535"/>
<rect x="53.5" y="51.2" width="7.4" height="5" fill="#cfd4d4"/>
<polygon points="63.4,47.6 76,47.6 76,76 63.4,76" fill="#55292e"/>
<rect x="66.6" y="49.9" width="9.4" height="3.3" fill="#e9e6e6"/>
<rect x="5.6" y="55.4" width="5.4" height="2" fill="#a75a60"/>
<path d="M-2 64.6Q8 60.4 17 60.8L23 62.8Q26.8 66 26.8 70V76H-2Z" fill="#212426"/>
<path d="M2 64.4L14 62.6L18 66H2Z" fill="#4e575a"/>
<path d="M15.4 64.6L21 64.4Q24 66 24.6 69H15.4Z" fill="#70777a"/>
<rect x="26.8" y="70.4" width="10" height="5.6" fill="#7b8184"/>
<path d="M31.6 76Q40 69.6 52 68.4L66 68Q72.6 68.8 76 70.6V76Z" fill="#2b63c8"/>
<path d="M43 73.6L52 70.4L63 70.2L68 73.6Z" fill="#1c3f82"/>
</g>
<g stroke="#4d6b66" stroke-width=".5" opacity=".45"><path d="M5 10.4V22M11 7.4V20.2M17 4.4V18.2M23 1.6V16.4M29 2.6V14.6M35 .4V12.6M41 0V10.8M47 0V9M53 0V7"/><path d="M6 24.6V32.4M13 22.6V31.4M20 20.4V30.4M27 18.4V29.4M34 16.2V28.4M41 14.2V27.2M47 12.4V26.4"/></g>
<g stroke="#55706e" stroke-width=".5" opacity=".5"><path d="M26 32.4V49.4M31 31.6V49.2M36 30.8V49.2"/></g>
<g stroke="#232a2a" stroke-width=".9"><path d="M25 56.4V70M31 56.4V70M37 56.4V69M43.6 54.6V69.4M51 50.6V70"/></g>
<path d="M19.6 50.8V54.7M57.2 51.2V56.2" stroke="#6a7070" stroke-width=".7"/>
<path d="M68.6 50.4V52.8M70.2 50.4V52.8M71.8 50.4V52.8M73.6 50.4V52.8" stroke="#6d4448" stroke-width=".55"/>
</svg>
  <div class="row" style="top:41.5px"><svg class="ic" width="10" height="10" viewBox="0 0 10 10" style="left:-16px;top:1.7px"><rect x=".5" y="1.3" width="8.5" height="8.2" rx=".8" fill="none" stroke="#a9a9a9" stroke-width="1"/><path d="M2.7 0V1.9M6.8 0V1.9" stroke="#a9a9a9" stroke-width="1"/><path d="M2.5 5.4L4.2 7L7.1 3.6" fill="none" stroke="#a9a9a9" stroke-width="1"/></svg>23.11.2022</div>
  <div class="row" style="top:57.85px"><svg class="ic" width="10" height="10" viewBox="0 0 10 10" style="left:-16.1px;top:1.85px"><circle cx="4.8" cy="5" r="4.3" fill="none" stroke="#a9a9a9" stroke-width="1"/><path d="M4.8 2.6V5.1L6.6 6.4" fill="none" stroke="#a9a9a9" stroke-width=".9"/></svg>09:00 - 18:00</div>
  <div class="row" style="top:74.6px"><svg class="ic" width="10" height="10" viewBox="0 0 10 10" style="left:-16px;top:2.5px"><path d="M.5 .5H5V4.5H9.1V9.5H.5Z" fill="none" stroke="#a9a9a9" stroke-width="1" stroke-linejoin="miter"/></svg>Cluj Croitorilor</div>
  <div class="row" style="top:90.55px"><svg class="ic" width="11" height="12" viewBox="0 0 11 12" style="left:-16.9px;top:1.15px"><path d="M.9 3.2L5.5 .6L10.1 3.2L5.5 5.8Z" fill="#fff" stroke="#a9a9a9" stroke-width=".9" stroke-linejoin="round"/><path d="M.9 5.5L5.5 8.1L10.1 5.5M.9 7.8L5.5 10.4L10.1 7.8" fill="none" stroke="#a9a9a9" stroke-width=".9" stroke-linejoin="round" stroke-linecap="round"/><path d="M.9 3.2H2.4M8.6 3.2H10.1M.9 5.5H2.4M8.6 5.5H10.1M.9 7.8H2.4M8.6 7.8H10.1" stroke="#a9a9a9" stroke-width=".55"/></svg>Long Description</div>
  <div class="row" style="top:106.9px"><svg class="ic" width="11" height="6" viewBox="0 0 11 6" style="left:-16.9px;top:4.25px"><path d="M1 2.9L5.5 .8L10 2.9L5.5 5Z" fill="none" stroke="#a9a9a9" stroke-width="1" stroke-linejoin="round"/><path d="M1 2.9H2.2M8.8 2.9H10" stroke="#a9a9a9" stroke-width=".7"/></svg>UX design area</div>
  <div class="row" style="top:123.7px"><svg class="ic" width="10" height="11" viewBox="0 0 10 11" style="left:-15.85px;top:1.6px"><rect x="2.3" y=".5" width="4.6" height="5.4" rx=".6" fill="none" stroke="#a9a9a9" stroke-width="1"/><rect x=".55" y="5.9" width="8" height="1.7" rx=".85" fill="#fff" stroke="#a9a9a9" stroke-width="1"/><path d="M4.6 7.9V10.2M1.3 10.25H7.9" fill="none" stroke="#a9a9a9" stroke-width="1"/></svg>12</div>
  <div class="abs hr"></div>
  <div class="edit" style="left:137.9px">EDITEAZĂ</div>
</div>

</body>
</html>
